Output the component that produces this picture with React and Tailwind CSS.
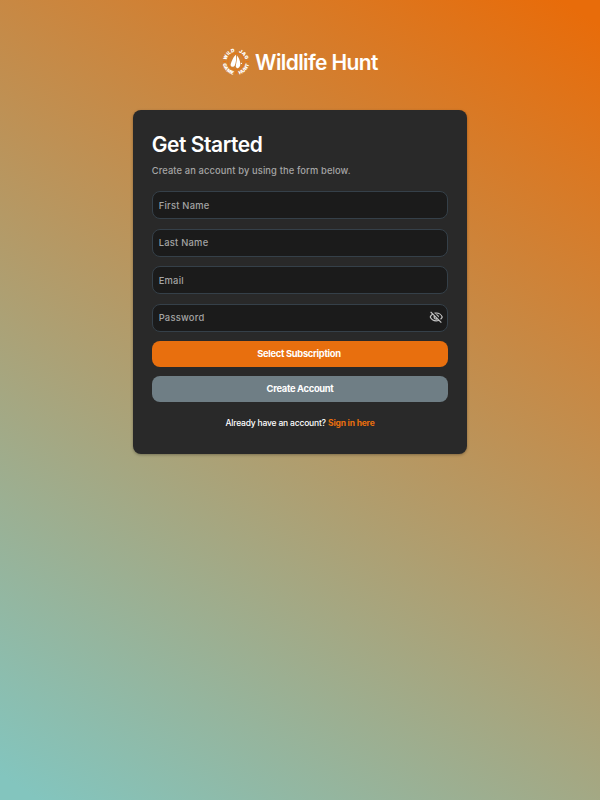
import { useState } from 'react';
import { MdOutlineVisibilityOff, MdOutlineVisibility } from 'react-icons/md';

function Logo() {
  return (
    <svg className="w-[28px] h-[28px]" viewBox="0 0 28 28" fill="none">
      <circle cx="14" cy="13.5" r="8.2" stroke="#e8750f" strokeWidth="0.9" />
      <path d="M1 13.5h3M24 13.5h3M14 23v3" stroke="#e8750f" strokeWidth="1.2" />
      <defs>
        <path id="wild-arc" d="M4.4 13.5 A9.6 9.6 0 0 1 14 3.9" />
        <path id="jag-arc" d="M14 3.9 A9.6 9.6 0 0 1 23.6 13.5" />
        <path id="game-arc" d="M0.6 13.5 A13.4 13.4 0 0 0 14 26.9" />
        <path id="hunt-arc" d="M14 26.9 A13.4 13.4 0 0 0 27.4 13.5" />
      </defs>
      <g fill="#fff" fontFamily="Inter, sans-serif" fontWeight="900" fontSize="4.8" textAnchor="middle">
        <text><textPath href="#wild-arc" startOffset="50%">WILD</textPath></text>
        <text letterSpacing="0.2"><textPath href="#jag-arc" startOffset="54%">JAG</textPath></text>
        <text letterSpacing="0.2"><textPath href="#game-arc" startOffset="49%">GAME</textPath></text>
        <text letterSpacing="0.3"><textPath href="#hunt-arc" startOffset="53%">HUNT</textPath></text>
      </g>
      {/* Hoof print */}
      <path d="M14 6.8 C11.6 8.6 9.2 13.6 8.6 16.8 C8.4 19 11.6 19.6 12.8 17.6 C14 15.2 14.4 10.1 14 6.8Z" fill="#fff" />
      <path d="M15 7.6 C16.8 9.6 18.2 13 18.3 15.8 C18.4 18.2 17 20.6 15.2 20.2 C13.6 19.8 13.6 18.2 14 16.6 C14.6 14.2 14.9 10.6 15 7.6Z" fill="#fff" />
      <circle cx="19.4" cy="15.4" r="0.6" fill="#fff" />
    </svg>
  );
}

function Field({ label, type = 'text', children }) {
  return (
    <div className="flex items-center h-[28px] rounded-[8px] border-[1.33px] border-[#354049] bg-[#1b1b1b] pl-[6px] pr-[4px]">
      <input
        type={type}
        placeholder={label}
        className="flex-1 min-w-0 pt-px bg-transparent outline-none text-[9.33px] leading-[14px] font-medium tracking-[0.26px] text-white placeholder:text-[#a5a5a5]"
      />
      {children}
    </div>
  );
}

export default function App() {
  const [visible, setVisible] = useState(false);

  return (
    <div className="min-h-screen flex flex-col items-center bg-[linear-gradient(213.1deg,#e86c0a_2.1%,#83c5be_97.9%)] font-['Inter',sans-serif]">
      <header className="flex items-center gap-[5px] mt-[47px] h-[30px]">
        <Logo />
        <span className="pt-px text-[21px] leading-[30px] font-semibold tracking-[-0.6px] text-white">Wildlife Hunt</span>
      </header>

      <main className="mt-[33px] w-[334px] h-[344px] rounded-[8px] bg-[#292929] shadow-[0_1px_3px_rgba(0,0,0,0.3)] px-[18.67px] pt-[21px]">
        <h1 className="text-[21px] leading-[28px] font-semibold tracking-[-0.44px] text-white">Get Started</h1>
        <p className="mt-[5px] text-[9.33px] leading-[14px] font-medium tracking-[0.13px] text-[#a5a5a5]">
          Create an account by using the form below.
        </p>

        <form className="mt-[13.4px] flex flex-col gap-[9.4px]" onSubmit={(e) => e.preventDefault()}>
          <Field label="First Name" />
          <Field label="Last Name" />
          <Field label="Email" />
          <Field label="Password" type={visible ? 'text' : 'password'}>
            <button type="button" onClick={() => setVisible(!visible)} aria-label="Toggle password" className="text-[#c4c4c4] cursor-pointer">
              {visible ? <MdOutlineVisibility size={14.5} /> : <MdOutlineVisibilityOff size={14.5} />}
            </button>
          </Field>
          <button type="button" className="h-[26px] rounded-[8px] bg-[#e86f0e] pr-[2px] text-[9.33px] font-bold tracking-[-0.3px] text-white cursor-pointer">
            Select Subscription
          </button>
          <button type="submit" className="h-[26px] rounded-[8px] bg-[#6f7e85] text-[9.33px] font-bold tracking-[-0.3px] text-white cursor-pointer">
            Create Account
          </button>
        </form>

        <p className="mt-[15px] text-center text-[8.5px] leading-[13px] font-medium tracking-[-0.19px] text-white">
          Already have an account? <a href="#" className="font-bold text-[#e86f0e]">Sign in here</a>
        </p>
      </main>
    </div>
  );
}
